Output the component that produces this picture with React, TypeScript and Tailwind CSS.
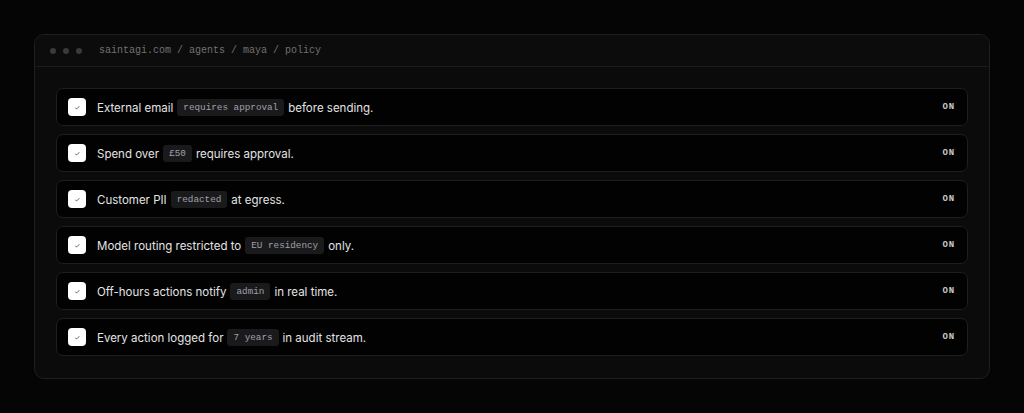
const RULES: { before: string; code: string; after: string }[] = [
  { before: 'External email', code: 'requires approval', after: 'before sending.' },
  { before: 'Spend over', code: '£50', after: 'requires approval.' },
  { before: 'Customer PII', code: 'redacted', after: 'at egress.' },
  { before: 'Model routing restricted to', code: 'EU residency', after: 'only.' },
  { before: 'Off-hours actions notify', code: 'admin', after: 'in real time.' },
  { before: 'Every action logged for', code: '7 years', after: 'in audit stream.' },
];

const mono = "font-['Liberation_Mono','DejaVu_Sans_Mono',monospace]";

export default function App() {
  return (
    <div className="w-[1024px] h-[413px] bg-[#050505] pt-[34px] pl-[34px] font-['Inter','Noto_Sans',sans-serif]">
      <div className="w-[956px] rounded-[10px] border border-[#1f1f1f] bg-[#0b0b0b] overflow-hidden">
        {/* title bar */}
        <div className="h-[32px] flex items-center pl-[15px] border-b border-[#1c1c1c] bg-[#0c0c0c]">
          <div className="flex gap-[7px]">
            <span className="w-[6px] h-[6px] rounded-full bg-[#3a3a3a]" />
            <span className="w-[6px] h-[6px] rounded-full bg-[#3a3a3a]" />
            <span className="w-[6px] h-[6px] rounded-full bg-[#3a3a3a]" />
          </div>
          <span className={`ml-[17px] text-[10px] text-[#707070] ${mono}`}>
            saintagi.com / agents / maya / policy
          </span>
        </div>

        {/* rules */}
        <div className="pt-[21px] px-[21px] pb-[22px] flex flex-col gap-[8px]">
          {RULES.map(rule => (
            <div
              key={rule.code}
              className="h-[38px] flex items-center pl-[11px] pr-[12px] rounded-[7px] border border-[#1e1e1e] bg-[#020202]"
            >
              <span className="w-[18px] h-[18px] rounded-[4px] bg-white flex items-center justify-center text-[7px] text-[#555] leading-none">
                ✓
              </span>
              <span className="ml-[11px] flex items-center gap-[4px] text-[11.5px] leading-[16px] pt-[1px] text-[#e4e4e4]">
                {rule.before}
                <code className={`px-[6px] py-[2px] rounded-[3px] bg-[#1a1a1c] text-[9.3px] leading-[13px] text-[#a0a0a8] ${mono}`}>
                  {rule.code}
                </code>
                {rule.after}
              </span>
              <span className={`ml-auto pt-[2px] text-[9px] font-bold text-[#c8c8c8] tracking-[0.1em] ${mono}`}>
                ON
              </span>
            </div>
          ))}
        </div>
      </div>
    </div>
  );
}
